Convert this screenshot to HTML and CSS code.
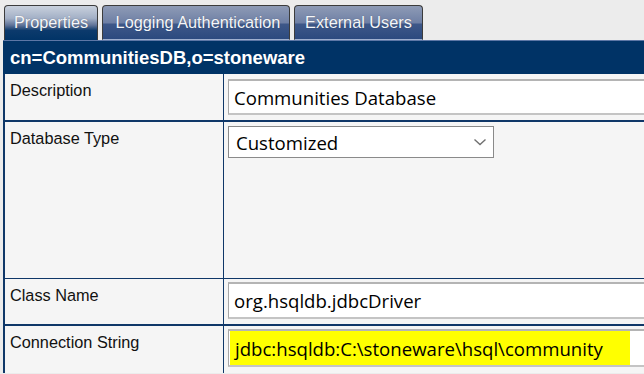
FILE: index.html
```html
<!DOCTYPE html>
<html>
<head>
<meta charset="utf-8">
<link rel="stylesheet" href="styles.css">
</head>
<body>
<div class="page">
  <div class="tabs">
    <div class="tab tab-active tab-w1">Properties</div>
    <div class="tab tab-w2">Logging Authentication</div>
    <div class="tab tab-w3">External Users</div>
  </div>
  <div class="panel">
    <div class="title">cn=CommunitiesDB,o=stoneware</div>
    <div class="rows">
      <div class="row row-desc">
        <div class="label">Description</div>
        <div class="value"><div class="field field-desc">Communities Database</div></div>
      </div>
      <div class="row row-type">
        <div class="label">Database Type</div>
        <div class="value">
          <div class="select">
            <span>Customized</span>
            <svg class="chev" width="14" height="8" viewBox="0 0 14 8"><path d="M1.5 1.5 L7 6.5 L12.5 1.5" fill="none" stroke="#707070" stroke-width="1.4"/></svg>
          </div>
        </div>
      </div>
      <div class="row row-class">
        <div class="label">Class Name</div>
        <div class="value"><div class="field field-class">org.hsqldb.jdbcDriver</div></div>
      </div>
      <div class="row row-conn">
        <div class="label">Connection String</div>
        <div class="value"><div class="field field-conn"><span class="hl">jdbc:hsqldb:C:\stoneware\hsql\community</span></div></div>
      </div>
    </div>
  </div>
</div>
</body>
</html>
```
FILE: styles.css
```css
html, body {
  margin: 0;
  padding: 0;
  background: #ececec;
  overflow: hidden;
}
.page {
  padding-left: 3px;
  font-family: "Liberation Sans", Arial, sans-serif;
}
.tabs {
  display: flex;
  gap: 4px;
  padding-top: 5px;
  padding-left: 1px;
  height: 36px;
}
.tab {
  height: 35px;
  box-sizing: border-box;
  border: 1px solid #3c3c3c;
  border-bottom: 1px solid #9fb0cf;
  border-radius: 4px 4px 0 0;
  color: #f4f6fa;
  font-size: 16.3px;
  line-height: 32px;
  text-align: center;
  text-shadow: 0 0 1px rgba(0, 0, 0, 0.35);
  background: linear-gradient(#8e9bb6 0%, #6f80a5 50%, #3d5788 56%, #2c4a7f 100%);
}
.tab-active {
  height: 36px;
  border-bottom: none;
  background: linear-gradient(#c9d1dd 0%, #a3b0c6 35%, #5f7398 55%, #0c3a6c 70%, #003366 100%);
}
.tab-w1 { width: 94px; }
.tab-w2 { width: 188px; padding-left: 4px; }
.tab-w3 { width: 129px; }
.panel {
  background: #f5f5f5;
}
.title {
  background: #003366;
  border-top: 1px solid #5d77a6;
  height: 33px;
  color: #ffffff;
  font-weight: bold;
  font-size: 18.5px;
  line-height: 33px;
  padding-left: 7px;
  margin-top: -1px;
  position: relative;
}
.rows {
  border-left: 2px solid #0f3768;
}
.row {
  display: grid;
  grid-template-columns: 219px 1fr;
}
.row-desc { height: 46px; border-bottom: 2px solid #0f3768; }
.row-type { height: 156px; border-bottom: 1px solid #0f3768; }
.row-class { height: 45px; border-bottom: 2px solid #0f3768; }
.row-conn { height: 47px; }
.label {
  border-right: 1px solid #0f3768;
  padding: 7px 0 0 5px;
  font-size: 16.3px;
  color: #111;
}
.value {
  padding-left: 4px;
  font-family: "Open Sans", "Noto Sans", sans-serif;
  font-size: 18.6px;
  color: #000;
  min-width: 0;
}
.field {
  background: #ffffff;
  border: 1px solid #a6a6a6;
  border-right: none;
  border-top: 2px solid #b4b4b4;
  border-bottom: 2px solid #c4c4c4;
  box-sizing: border-box;
  padding-left: 5px;
  display: flex;
  align-items: center;
}
.field-desc { margin-top: 5px; height: 36px; }
.field-class { margin-top: 3px; height: 37px; }
.field-conn { margin-top: 3px; height: 38px; padding-left: 1px; align-items: stretch; }
.hl {
  background: #ffff00;
  width: 395px;
  padding-left: 5px;
  display: flex;
  align-items: center;
}
.select {
  margin-top: 4px;
  width: 266px;
  height: 32px;
  box-sizing: border-box;
  border: 1px solid #8a8a8a;
  background: #ffffff;
  display: flex;
  align-items: center;
  justify-content: space-between;
  padding: 0 6px 0 7px;
}
.chev {
  display: block;
}
```
